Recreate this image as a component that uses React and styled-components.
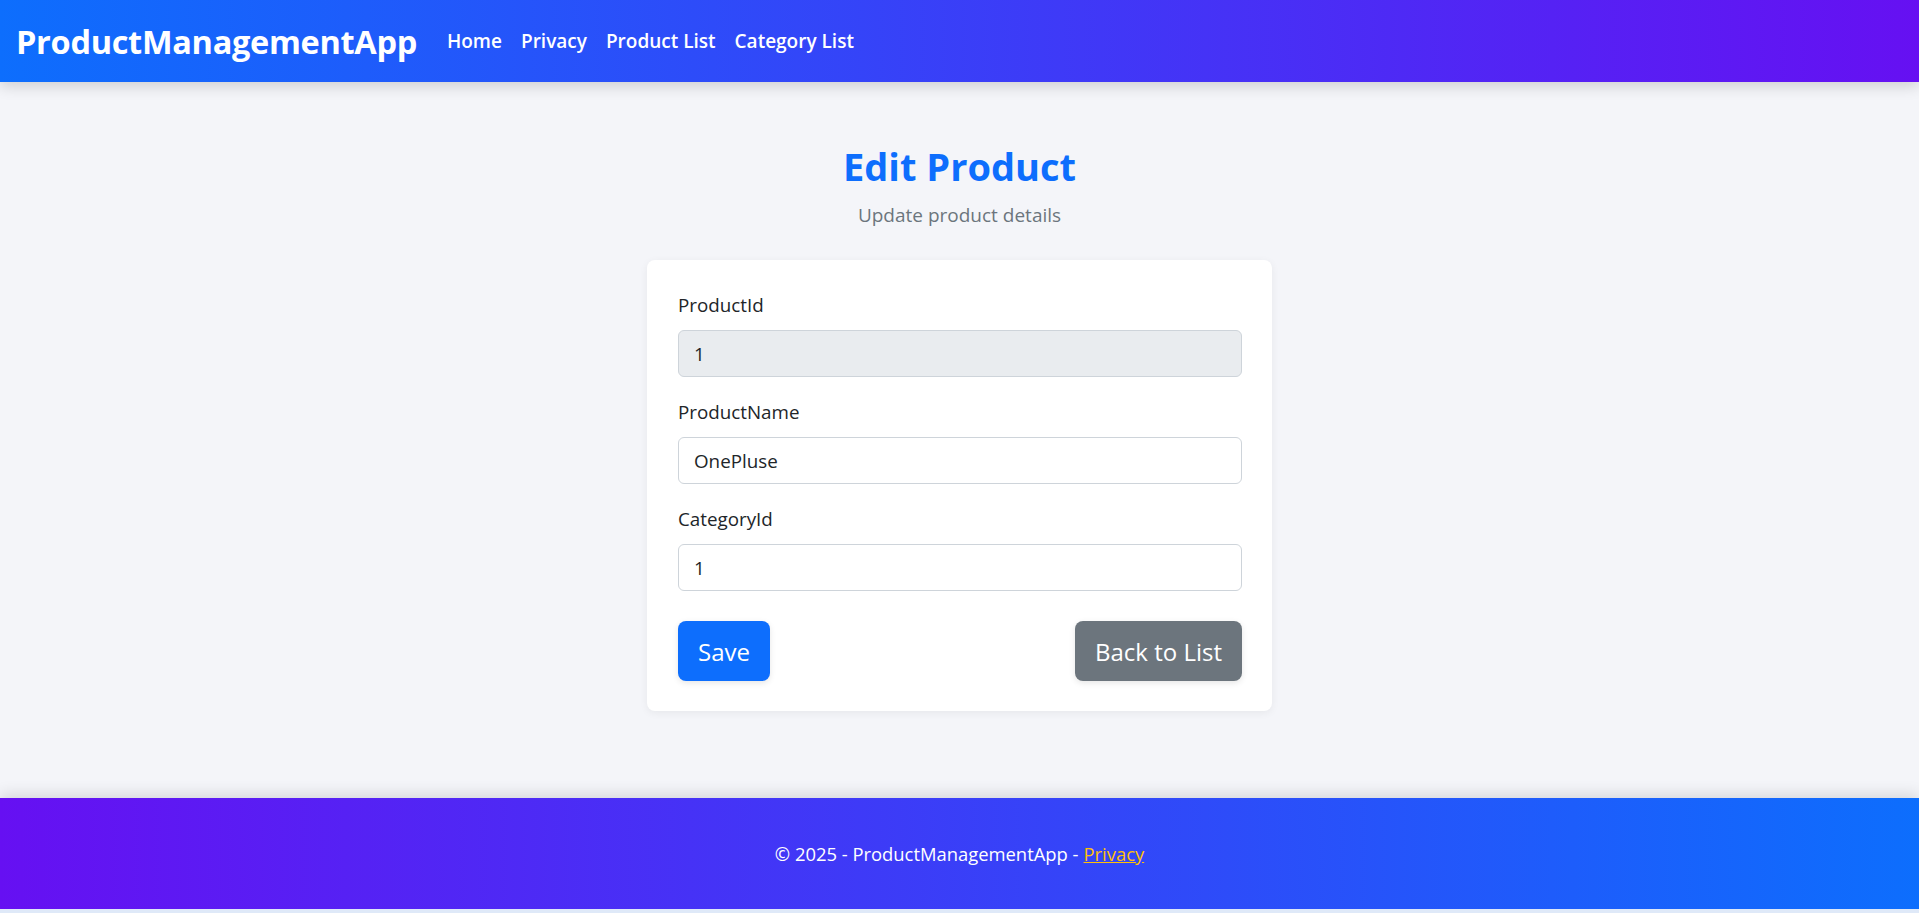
import React from "react";
import styled, { createGlobalStyle } from "styled-components";

const GlobalStyle = createGlobalStyle`
  html {
    background-color: #dfe9f8;
  }
  body {
    margin: 0;
    font-family: "Segoe UI", "Open Sans", "Noto Sans", sans-serif;
    color: #212529;
    background-color: #dfe9f8;
  }
  * {
    box-sizing: border-box;
  }
`;

const Pagina = styled.div`
  display: flex;
  flex-direction: column;
  height: 909px;
  background-color: #f4f5f9;
`;

const BarraNav = styled.nav`
  display: flex;
  align-items: center;
  height: 82px;
  padding: 0 16px;
  background: linear-gradient(90deg, #0d6efd 0%, #6610f2 100%);
  box-shadow: 0 4px 14px rgba(0, 0, 0, 0.16);
  position: relative;
  z-index: 2;
`;

const Marca = styled.a`
  color: #fff;
  font-size: 32.5px;
  font-weight: 700;
  text-decoration: none;
  margin-right: 30px;
  letter-spacing: -0.3px;
`;

const ListaLinks = styled.div`
  display: flex;
  align-items: center;
  gap: 19px;
`;

const LinkNav = styled.a`
  color: #fff;
  font-size: 19px;
  font-weight: 600;
  text-decoration: none;
`;

const Conteudo = styled.main`
  flex: 1;
  display: flex;
  flex-direction: column;
  align-items: center;
  padding-top: 60px;
`;

const Titulo = styled.h2`
  margin: 0 0 10px 0;
  font-size: 38px;
  line-height: 48px;
  font-weight: 700;
  color: #0d6efd;
`;

const Subtitulo = styled.p`
  margin: 0 0 30px 0;
  font-size: 19px;
  line-height: 30px;
  color: #6c757d;
`;

const Cartao = styled.div`
  width: 625px;
  background-color: #fff;
  border-radius: 8px;
  box-shadow: 0 2px 8px rgba(0, 0, 0, 0.06);
  padding: 30px 30px 30px 31px;
`;

const Grupo = styled.div`
  display: flex;
  flex-direction: column;
  margin-bottom: 20px;
`;

const Rotulo = styled.label`
  font-size: 18.8px;
  line-height: 30px;
  margin-bottom: 10px;
`;

const Campo = styled.input`
  height: 47px;
  width: 100%;
  padding: 0 15px;
  font-family: inherit;
  font-size: 18.8px;
  color: #212529;
  border: 1px solid #ced4da;
  border-radius: 6px;
  background-color: ${(props) => (props.readOnly ? "#e9ecef" : "#fff")};
  outline: none;
`;

const Acoes = styled.div`
  display: flex;
  justify-content: space-between;
  margin-top: 30px;
`;

const Botao = styled.button`
  height: 60px;
  padding: 0 20px;
  font-family: inherit;
  font-size: 24px;
  color: #fff;
  border: none;
  border-radius: 8px;
  background-color: ${(props) => (props.$secundario ? "#6c757d" : "#0d6efd")};
  box-shadow: 0 2px 6px rgba(0, 0, 0, 0.1);
  cursor: pointer;
`;

const Rodape = styled.footer`
  height: 111px;
  display: flex;
  align-items: center;
  justify-content: center;
  background: linear-gradient(90deg, #6610f2 0%, #0d6efd 100%);
  box-shadow: 0 -4px 14px rgba(0, 0, 0, 0.12);
  color: #fff;
  font-size: 18.4px;
`;

const LinkRodape = styled.a`
  color: #ffc107;
  text-decoration: underline;
  margin-left: 5px;
`;

export default function App() {
  return (
    <>
      <GlobalStyle />
      <Pagina>
        <BarraNav>
          <Marca href="#">ProductManagementApp</Marca>
          <ListaLinks>
            <LinkNav href="#">Home</LinkNav>
            <LinkNav href="#">Privacy</LinkNav>
            <LinkNav href="#">Product List</LinkNav>
            <LinkNav href="#">Category List</LinkNav>
          </ListaLinks>
        </BarraNav>
        <Conteudo>
          <Titulo>Edit Product</Titulo>
          <Subtitulo>Update product details</Subtitulo>
          <Cartao>
            <Grupo>
              <Rotulo>ProductId</Rotulo>
              <Campo value="1" readOnly />
            </Grupo>
            <Grupo>
              <Rotulo>ProductName</Rotulo>
              <Campo defaultValue="OnePluse" />
            </Grupo>
            <Grupo>
              <Rotulo>CategoryId</Rotulo>
              <Campo defaultValue="1" />
            </Grupo>
            <Acoes>
              <Botao>Save</Botao>
              <Botao $secundario>Back to List</Botao>
            </Acoes>
          </Cartao>
        </Conteudo>
        <Rodape>
          © 2025 - ProductManagementApp -
          <LinkRodape href="#">Privacy</LinkRodape>
        </Rodape>
      </Pagina>
    </>
  );
}
